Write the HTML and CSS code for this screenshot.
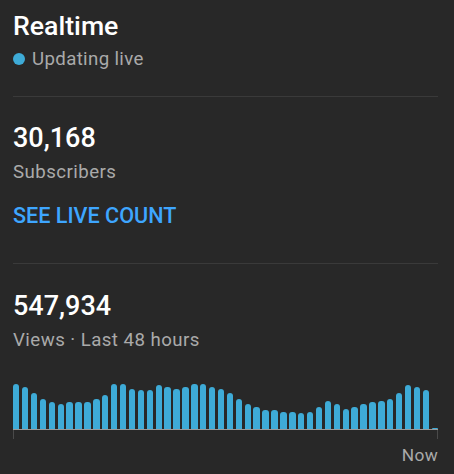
FILE: index.html
```html
<!DOCTYPE html>
<html>
<head>
<meta charset="utf-8">
<link rel="stylesheet" href="styles.css">
</head>
<body>
<div class="card">
  <section class="head">
    <h1 class="title">Realtime</h1>
    <div class="live"><span class="dot"></span><span>Updating live</span></div>
  </section>
  <hr class="divider">
  <section class="stat subs">
    <div class="num">30,168</div>
    <div class="label">Subscribers</div>
    <a class="link" href="#">SEE LIVE COUNT</a>
  </section>
  <hr class="divider">
  <section class="stat views">
    <div class="num">547,934</div>
    <div class="label">Views · Last 48 hours</div>
  </section>
  <div class="chart">
    <div class="bars">
      <div class="bar" style="height:45px"></div>
      <div class="bar" style="height:42px"></div>
      <div class="bar" style="height:35.7px"></div>
      <div class="bar" style="height:29.7px"></div>
      <div class="bar" style="height:26.7px"></div>
      <div class="bar" style="height:25.3px"></div>
      <div class="bar" style="height:26.7px"></div>
      <div class="bar" style="height:26.7px"></div>
      <div class="bar" style="height:26.7px"></div>
      <div class="bar" style="height:29.7px"></div>
      <div class="bar" style="height:34.3px"></div>
      <div class="bar" style="height:45px"></div>
      <div class="bar" style="height:45px"></div>
      <div class="bar" style="height:40.3px"></div>
      <div class="bar" style="height:39px"></div>
      <div class="bar" style="height:39px"></div>
      <div class="bar" style="height:43.7px"></div>
      <div class="bar" style="height:42px"></div>
      <div class="bar" style="height:40.3px"></div>
      <div class="bar" style="height:42px"></div>
      <div class="bar" style="height:45px"></div>
      <div class="bar" style="height:45px"></div>
      <div class="bar" style="height:42px"></div>
      <div class="bar" style="height:40.3px"></div>
      <div class="bar" style="height:35.7px"></div>
      <div class="bar" style="height:29.7px"></div>
      <div class="bar" style="height:25.3px"></div>
      <div class="bar" style="height:22px"></div>
      <div class="bar" style="height:19px"></div>
      <div class="bar" style="height:19px"></div>
      <div class="bar" style="height:17.3px"></div>
      <div class="bar" style="height:17.3px"></div>
      <div class="bar" style="height:16px"></div>
      <div class="bar" style="height:17.3px"></div>
      <div class="bar" style="height:22px"></div>
      <div class="bar" style="height:28px"></div>
      <div class="bar" style="height:25.3px"></div>
      <div class="bar" style="height:20.3px"></div>
      <div class="bar" style="height:22px"></div>
      <div class="bar" style="height:25.3px"></div>
      <div class="bar" style="height:26.7px"></div>
      <div class="bar" style="height:28px"></div>
      <div class="bar" style="height:29.7px"></div>
      <div class="bar" style="height:35.7px"></div>
      <div class="bar" style="height:43.7px"></div>
      <div class="bar" style="height:42px"></div>
      <div class="bar" style="height:39px"></div>
      <div class="bar" style="height:1.5px"></div>
    </div>
    <div class="axis"><span class="tick"></span><span class="tick"></span></div>
    <div class="now">Now</div>
  </div>
</div>
</body>
</html>
```

FILE: styles.css
```css
html, body {
  margin: 0;
  padding: 0;
  background: #282828;
}
body {
  font-family: Roboto, "Liberation Sans", sans-serif;
  color: #ffffff;
}
.card {
  width: 425px;
  padding: 10px 16px 0 13px;
}
.title {
  margin: 0;
  font-size: 26.67px;
  line-height: 32px;
  font-weight: 500;
  color: #ffffff;
}
.live {
  margin-top: 5px;
  display: flex;
  align-items: center;
  gap: 7px;
  font-size: 18.67px;
  line-height: 24px;
  letter-spacing: 0.35px;
  color: #aaaaaa;
}
.dot {
  width: 12px;
  height: 12px;
  border-radius: 50%;
  background: #3eabd7;
  flex: none;
}
.divider {
  margin: 0;
  border: 0;
  height: 1px;
  background: #3a3a3a;
}
.head + .divider {
  margin-top: 25px;
}
.stat {
  display: flex;
  flex-direction: column;
  align-items: flex-start;
}
.subs {
  padding-top: 25px;
}
.num {
  font-size: 27px;
  line-height: 32px;
  font-weight: 500;
  color: #ffffff;
}
.label {
  margin-top: 6px;
  font-size: 18.67px;
  line-height: 24px;
  letter-spacing: 0.45px;
  color: #aaaaaa;
}
.link {
  margin-top: 18px;
  font-size: 21.6px;
  line-height: 28px;
  font-weight: 500;
  color: #3ea6ff;
  text-decoration: none;
}
.subs + .divider {
  margin-top: 33px;
}
.views {
  padding-top: 26px;
}
.chart {
  margin-top: 31px;
}
.bars {
  height: 46px;
  display: grid;
  grid-template-columns: repeat(48, 1fr);
  column-gap: 2.5px;
  align-items: end;
}
.bar {
  background: #3eabd7;
  border-radius: 3px 3px 0 0;
}
.axis {
  height: 9px;
  border-top: 1px solid #9a9a9a;
  display: flex;
  justify-content: space-between;
}
.tick {
  width: 1px;
  height: 9px;
  background: #4a4a4a;
}
.now {
  margin-top: 6px;
  text-align: right;
  font-size: 17.33px;
  line-height: 20px;
  letter-spacing: 0.3px;
  color: #aaaaaa;
}
```
